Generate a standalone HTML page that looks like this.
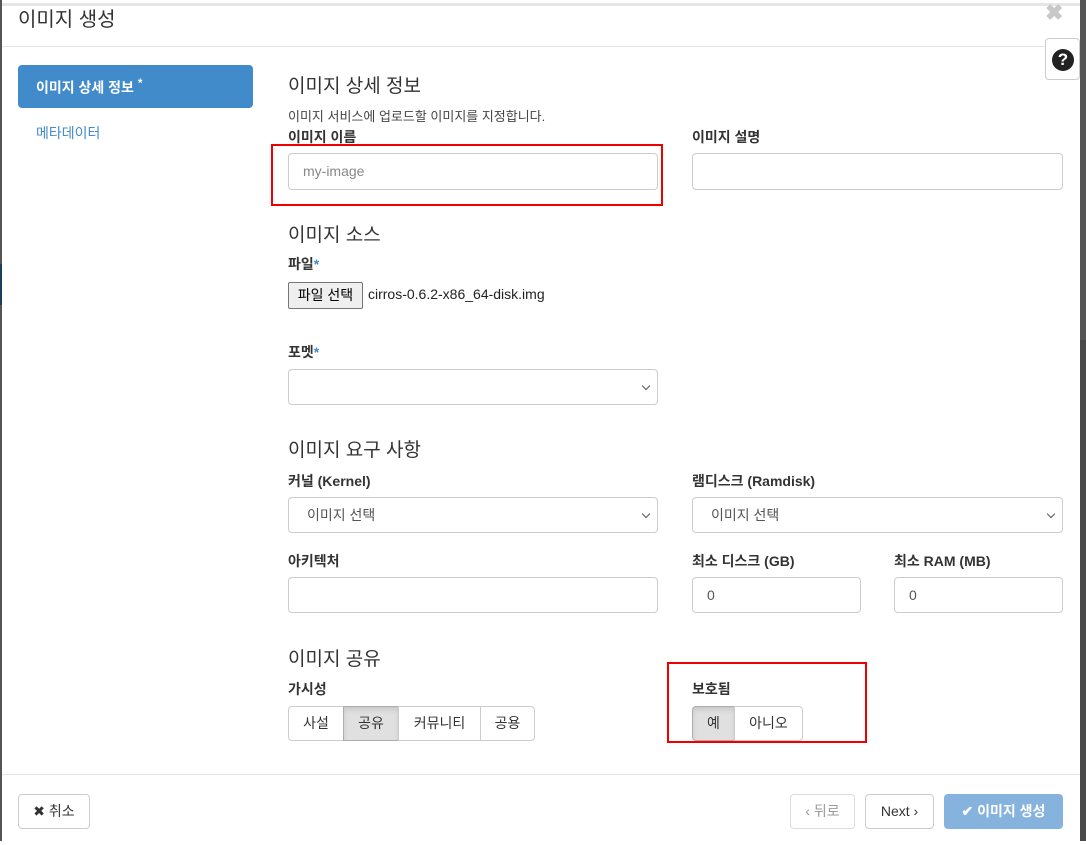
<!DOCTYPE html>
<html><head><meta charset="utf-8"><style>
*{box-sizing:border-box;margin:0;padding:0}
body{width:1086px;height:845px;background:#fff;position:relative;overflow:hidden;font-family:"Liberation Sans","Noto Sans CJK KR",sans-serif;color:#333;font-size:14px}
.a{position:absolute}
.h{font-size:19px;color:#333}
.lbl{font-weight:bold;font-size:14px;color:#333}
.inp{position:absolute;border:1px solid #ccc;border-radius:4px;background:#fff;height:37px;padding:0 14px;line-height:35px;color:#555;font-size:14px}
.sel:after{content:"";position:absolute;right:8px;top:13px;width:5px;height:5px;border-right:1.5px solid #555;border-bottom:1.5px solid #555;transform:rotate(45deg)}
.btn{position:absolute;border:1px solid #ccc;border-radius:4px;background:#fff;text-align:center;font-size:14px;color:#333}
.star{color:#428bca}
</style></head><body>
<div class="a" style="left:0;top:3px;width:1086px;height:3px;background:#e6e6e6"></div>
<div class="a" style="left:0;top:0;width:2px;height:845px;background:#555"></div>
<div class="a" style="left:0;top:264px;width:2px;height:41px;background:#1d3f5e"></div>
<div class="a" style="left:1080px;top:0;width:6px;height:845px;background:#555"></div>
<div class="a" style="left:1080px;top:340px;width:6px;height:505px;background:#4a4a4a"></div>
<div class="a" style="left:0;top:841px;width:1086px;height:4px;background:#fff"></div>

<div class="a" style="left:18px;top:3px;font-size:20px;color:#333">이미지 생성</div>
<div class="a" style="left:1045px;top:0px;font-size:22px;color:#c8c8c8;font-weight:bold">✖</div>
<div class="a" style="left:2px;top:46px;width:1078px;height:1px;background:#e5e5e5"></div>
<div class="btn" style="left:1045px;top:38px;width:35px;height:42px;border-radius:4px"><div style="position:absolute;left:6px;top:10px;width:22px;height:22px;border-radius:50%;background:#222;color:#fff;font-weight:bold;font-size:17px;line-height:22px">?</div></div>

<div class="a" style="left:18px;top:65px;width:235px;height:43px;background:#428bca;border-radius:4px;color:#fff;font-weight:bold;padding:12px 0 0 18px;font-size:14px">이미지 상세 정보 <sup>*</sup></div>
<div class="a" style="left:36px;top:123px;color:#428bca;font-size:14px">메타데이터</div>

<div class="a h" style="left:288px;top:71px">이미지 상세 정보</div>
<div class="a" style="left:288px;top:106px;font-size:13px;color:#444">이미지 서비스에 업로드할 이미지를 지정합니다.</div>
<div class="a lbl" style="left:288px;top:127px">이미지 이름</div>
<div class="inp" style="left:288px;top:153px;width:370px;color:#888">my-image</div>
<div class="a" style="left:271px;top:144px;width:392px;height:62px;border:2px solid #e00"></div>
<div class="a lbl" style="left:692px;top:127px">이미지 설명</div>
<div class="inp" style="left:692px;top:153px;width:371px"></div>

<div class="a h" style="left:288px;top:220px">이미지 소스</div>
<div class="a lbl" style="left:288px;top:254px">파일<span class="star">*</span></div>
<div class="a" style="left:288px;top:282px;width:75px;height:27px;border:1px solid #767676;border-radius:2px;background:#efefef;font-size:14px;text-align:center;line-height:25px;color:#000">파일 선택</div>
<div class="a" style="left:368px;top:286px;font-size:14px;color:#222">cirros-0.6.2-x86_64-disk.img</div>
<div class="a lbl" style="left:288px;top:342px">포멧<span class="star">*</span></div>
<div class="inp sel" style="left:288px;top:369px;width:370px;height:36px"></div>

<div class="a h" style="left:288px;top:435px">이미지 요구 사항</div>
<div class="a lbl" style="left:288px;top:471px">커널 (Kernel)</div>
<div class="inp sel" style="left:288px;top:497px;width:370px;height:36px;padding-left:18px">이미지 선택</div>
<div class="a lbl" style="left:692px;top:471px">램디스크 (Ramdisk)</div>
<div class="inp sel" style="left:692px;top:497px;width:371px;height:36px;padding-left:18px">이미지 선택</div>
<div class="a lbl" style="left:288px;top:551px">아키텍처</div>
<div class="inp" style="left:288px;top:577px;width:370px;height:36px"></div>
<div class="a lbl" style="left:692px;top:551px">최소 디스크 (GB)</div>
<div class="inp" style="left:692px;top:577px;width:169px;height:36px">0</div>
<div class="a lbl" style="left:894px;top:551px">최소 RAM (MB)</div>
<div class="inp" style="left:894px;top:577px;width:169px;height:36px">0</div>

<div class="a h" style="left:288px;top:644px">이미지 공유</div>
<div class="a lbl" style="left:288px;top:679px">가시성</div>
<div class="btn" style="left:288px;top:706px;width:56px;height:35px;line-height:33px;border-radius:4px 0 0 4px">사설</div>
<div class="btn" style="left:343px;top:706px;width:56px;height:35px;line-height:33px;border-radius:0;background:#e0e0e0;border-color:#adadad;box-shadow:inset 0 3px 5px rgba(0,0,0,.1)">공유</div>
<div class="btn" style="left:398px;top:706px;width:83px;height:35px;line-height:33px;border-radius:0">커뮤니티</div>
<div class="btn" style="left:480px;top:706px;width:55px;height:35px;line-height:33px;border-radius:0 4px 4px 0">공용</div>
<div class="a lbl" style="left:692px;top:679px">보호됨</div>
<div class="btn" style="left:692px;top:706px;width:43px;height:35px;line-height:33px;border-radius:4px 0 0 4px;background:#e0e0e0;border-color:#adadad;box-shadow:inset 0 3px 5px rgba(0,0,0,.1)">예</div>
<div class="btn" style="left:734px;top:706px;width:69px;height:35px;line-height:33px;border-radius:0 4px 4px 0">아니오</div>
<div class="a" style="left:667px;top:662px;width:200px;height:81px;border:2px solid #e00"></div>

<div class="a" style="left:2px;top:774px;width:1078px;height:1px;background:#e5e5e5"></div>
<div class="btn" style="left:18px;top:794px;width:72px;height:35px;line-height:33px">✖ 취소</div>
<div class="btn" style="left:790px;top:794px;width:65px;height:35px;line-height:33px;color:#999;border-color:#ddd">‹ 뒤로</div>
<div class="btn" style="left:865px;top:794px;width:69px;height:35px;line-height:33px">Next ›</div>
<div class="btn" style="left:944px;top:794px;width:119px;height:35px;line-height:33px;background:#85b3dd;border-color:#85b3dd;color:#fff;font-weight:bold">✔ 이미지 생성</div>
</body></html>
